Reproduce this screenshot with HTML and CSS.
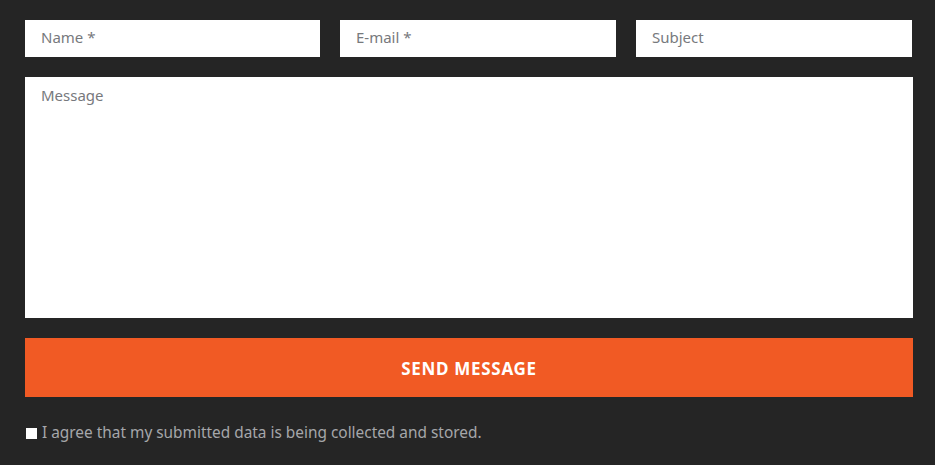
FILE: index.html
```html
<!DOCTYPE html>
<html>
<head>
<meta charset="utf-8">
<link rel="stylesheet" href="styles.css">
</head>
<body>
<form class="contact">
  <div class="row">
    <input class="field field-wide" type="text" placeholder="Name *">
    <input class="field" type="text" placeholder="E-mail *">
    <input class="field" type="text" placeholder="Subject">
  </div>
  <textarea class="message" placeholder="Message"></textarea>
  <button class="send" type="button">SEND MESSAGE</button>
  <label class="agree"><span class="box"></span>I agree that my submitted data is being collected and stored.</label>
</form>
</body>
</html>
```
FILE: styles.css
```css
html, body {
  margin: 0;
  padding: 0;
  background: #252525;
  width: 935px;
  height: 465px;
  overflow: hidden;
}
.contact {
  box-sizing: border-box;
  width: 913px;
  padding: 20px 0 0 25px;
  display: flex;
  flex-direction: column;
  font-family: "Noto Sans", "Open Sans", sans-serif;
}
.row {
  display: flex;
  gap: 20px;
  margin-bottom: 20px;
}
.field {
  box-sizing: border-box;
  width: 276px;
  height: 37px;
  border: 0;
  outline: 0;
  background: #fff;
  padding: 0 16px 3px;
  font-family: inherit;
  font-size: 15px;
  color: #333;
}
.field-wide { width: 295px; }
.field::placeholder, .message::placeholder { color: #77797d; opacity: 1; }
.message {
  box-sizing: border-box;
  width: 888px;
  height: 241px;
  border: 0;
  outline: 0;
  resize: none;
  background: #fff;
  padding: 8px 16px;
  font-family: inherit;
  font-size: 15px;
  margin: 0 0 20px;
  display: block;
}
.send {
  width: 888px;
  height: 59px;
  border: 0;
  background: #f15a24;
  color: #fff;
  font-family: inherit;
  font-weight: 700;
  font-size: 17px;
  letter-spacing: 0.7px;
  cursor: pointer;
  padding: 2px 0 0;
}
.agree {
  display: flex;
  align-items: center;
  margin-top: 26px;
  color: #a5a7aa;
  font-size: 15.4px;
  line-height: 20px;
}
.box {
  width: 11px;
  height: 11px;
  background: #fff;
  margin: 0 5px 0 1px;
  flex: none;
}
```
